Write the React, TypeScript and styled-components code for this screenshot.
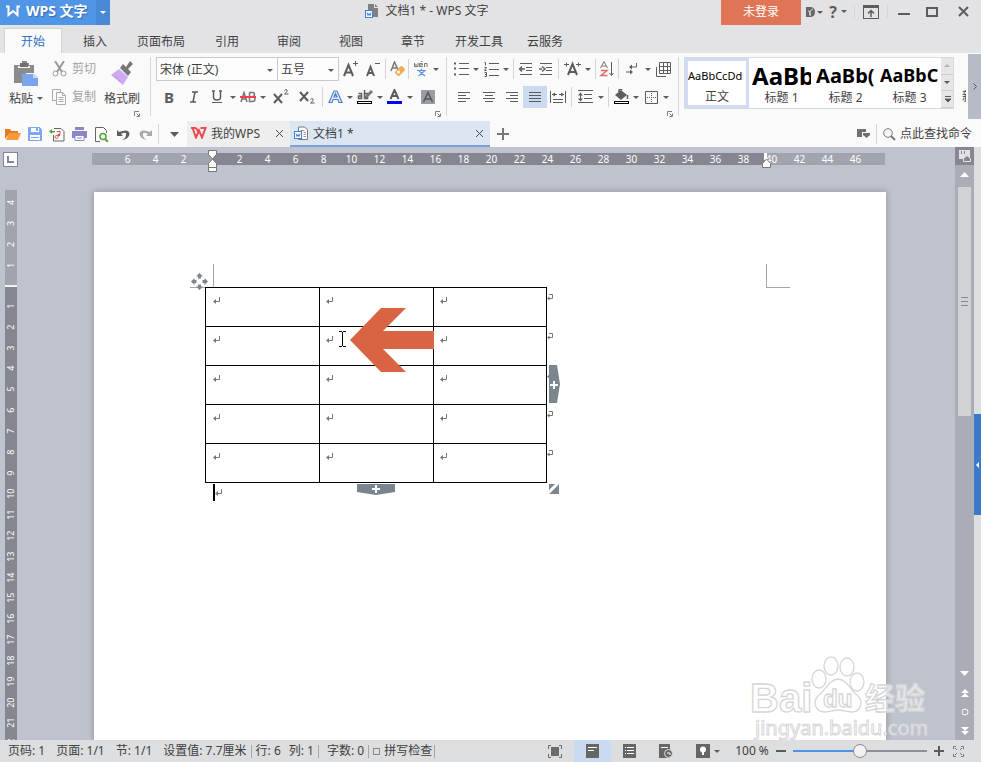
import React from 'react';
import styled, { createGlobalStyle, css } from 'styled-components';

const GlobalStyle = createGlobalStyle`
  * { box-sizing: border-box; }
  html, body { margin: 0; height: 100%; overflow: hidden; }
  body, button, input, select {
    font-family: "Noto Sans", "Noto Sans CJK SC", sans-serif;
    font-size: 12px;
    line-height: 16px;
    color: #3f3f3f;
  }
  button { border: 0; padding: 0; background: none; }
  svg { display: block; flex: none; }
  a { color: inherit; text-decoration: none; }
`;

/* ---------- shared parts ---------- */

const Shell = styled.div`
  display: flex;
  flex-direction: column;
  height: 100vh;
  background: #e3e3e5;
`;

const Icon = ({ w, h, children, label }: { w: number; h: number; children: React.ReactNode; label?: string }) => (
  <svg width={w} height={h} viewBox={`0 0 ${w} ${h}`} fill="none" aria-label={label} aria-hidden={!label}>
    {children}
  </svg>
);

const Caret = ({ color = '#5c5c5c' }: { color?: string }) => (
  <Icon w={6} h={3}>
    <path d="M0 0h6L3 3z" fill={color} />
  </Icon>
);

const Tool = styled.button<{ $w?: number; $on?: boolean }>`
  flex: none;
  display: flex;
  align-items: center;
  justify-content: center;
  gap: 4px;
  width: ${(p) => p.$w ?? 20}px;
  height: 22px;
  background: ${(p) => (p.$on ? '#c9daf1' : 'transparent')};
`;

const CaretTool = ({ label }: { label: string }) => (
  <Tool $w={10} aria-label={label}>
    <Caret />
  </Tool>
);

const Sep = styled.span<{ $h?: number }>`
  flex: none;
  width: 1px;
  height: ${(p) => p.$h ?? 20}px;
  margin: 0 2px;
  background: #d4d5d8;
`;

const Glyph = styled.span<{ $size: number }>`
  font-size: ${(p) => p.$size}px;
  line-height: 20px;
  color: #5c5c5c;
  font-weight: 700;
`;

/* ---------- title bar ---------- */

const TitleBar = styled.header`
  flex: none;
  display: flex;
  height: 25px;
`;

const Brand = styled.button`
  display: flex;
  align-items: center;
  gap: 6px;
  width: 96px;
  padding: 0 0 3px 6px;
  background: #5095e6;
  color: #fff;
  font-size: 14px;
  font-weight: 700;
  text-shadow: 1px 1px 1px #2f6cb5;
  white-space: nowrap;
`;

const BrandMenu = styled.button`
  display: flex;
  align-items: center;
  justify-content: center;
  width: 14px;
  background: #4a89d8;
`;

const Title = styled.div`
  flex: 1;
  display: flex;
  align-items: center;
  justify-content: center;
  gap: 7px;
  padding: 0 0 3px 22px;
  white-space: nowrap;
`;

const Login = styled.button`
  width: 80px;
  padding-bottom: 2px;
  background: #e07456;
  color: #fff;
`;

const WindowButtons = styled.div`
  display: flex;
  align-items: center;
  padding: 0 1px 2px 3px;
`;

/* ---------- menu tabs ---------- */

const Menu = styled.nav`
  flex: none;
  display: flex;
  align-items: flex-end;
  height: 28px;
  padding-left: 2px;
`;

const MenuTab = styled.a<{ $active?: boolean }>`
  display: flex;
  align-items: center;
  justify-content: center;
  height: 25px;
  min-width: 62px;
  padding: 2px 11px 0;
  white-space: nowrap;
  ${(p) =>
    p.$active &&
    css`
      min-width: 58px;
      margin: 0 2px;
      color: #2f6fbd;
      background: #fafafa;
      border: 1px solid #d2d3d6;
      border-bottom: 0;
    `}
`;

/* ---------- ribbon ---------- */

const Ribbon = styled.section`
  flex: none;
  display: flex;
  align-items: flex-start;
  height: 68px;
  background: #fafafa;
  overflow: hidden;
`;

const Group = styled.div<{ $left: number; $right: number }>`
  flex: none;
  display: flex;
  flex-direction: column;
  padding: 4px ${(p) => p.$right}px 0 ${(p) => p.$left}px;
  height: 64px;
  position: relative;
  &::after {
    content: '';
    position: absolute;
    right: 0;
    top: 4px;
    bottom: 1px;
    width: 1px;
    background: #d9dadc;
  }
`;

const Row = styled.div<{ $h: number; $mt?: number }>`
  display: flex;
  align-items: center;
  height: ${(p) => p.$h}px;
  margin-top: ${(p) => p.$mt ?? 0}px;
`;

const Launcher = styled.button`
  align-self: flex-end;
  margin-top: 3px;
  height: 6px;
`;

const Clip = styled.div`
  display: flex;
  height: 51px;
`;

const BigButton = styled.button`
  display: flex;
  flex-direction: column;
  align-items: center;
  justify-content: space-between;
  padding-top: 4px;
  white-space: nowrap;
  span { display: flex; align-items: center; gap: 4px; height: 19px; }
`;

const SmallStack = styled.div`
  display: flex;
  flex-direction: column;
  gap: 12px;
  padding: 4px 8px 0 9px;
`;

const SmallButton = styled.button`
  display: flex;
  align-items: center;
  gap: 5px;
  height: 16px;
  color: #a3a3a3;
  white-space: nowrap;
`;

const SelectBox = styled.label<{ $w: number; $joined?: boolean }>`
  position: relative;
  display: flex;
  align-items: center;
  width: ${(p) => p.$w}px;
  height: 24px;
  border: 1px solid #c9cacd;
  border-left-width: ${(p) => (p.$joined ? 0 : 1)}px;
  background: #fdfdfd;
  select {
    appearance: none;
    width: 100%;
    height: 22px;
    border: 0;
    padding: 2px 12px 0 3px;
    background: transparent;
  }
  svg { position: absolute; right: 4px; top: 11px; pointer-events: none; }
`;

const Gallery = styled.div`
  flex: none;
  display: flex;
  height: 52px;
  margin: 4px 0 0 5px;
  border: 1px solid #d9dadc;
  background: #fff;
`;

const StyleCard = styled.button<{ $on?: boolean }>`
  flex: none;
  display: flex;
  flex-direction: column;
  align-items: center;
  width: 64px;
  padding: ${(p) => (p.$on ? '0' : '3px 2px 0 3px')};
  border: ${(p) => (p.$on ? '3px solid #d0dcf3' : '0 solid transparent')};
`;

const Sample = styled.span<{ $size: number; $bold?: boolean }>`
  width: 100%;
  height: 29px;
  overflow: hidden;
  text-align: left;
  white-space: nowrap;
  color: #000;
  font-size: ${(p) => p.$size}px;
  font-weight: ${(p) => (p.$bold ? 700 : 400)};
  line-height: 29px;
`;

const GalleryScroll = styled.div`
  display: flex;
  flex-direction: column;
  width: 12px;
  background: #e6e6e8;
  button {
    flex: 1;
    display: flex;
    align-items: center;
    justify-content: center;
    border-bottom: 1px solid #cfcfd2;
  }
`;

const Clipped = styled.div`
  flex: 1;
  min-width: 0;
  overflow: hidden;
  padding: 36px 0 0 8px;
  margin-right: 2px;
  white-space: nowrap;
`;

const RibbonMore = styled.button`
  flex: none;
  display: flex;
  align-items: center;
  justify-content: center;
  width: 13px;
  height: 65px;
  margin-top: 1px;
  background: #b7bbc5;
`;

/* ---------- quick bar ---------- */

const QuickBar = styled.div`
  flex: none;
  display: flex;
  align-items: stretch;
  height: 26px;
  background: #fafafa;
`;

const QuickTools = styled.div`
  display: flex;
  align-items: center;
  padding-left: 2px;
`;

const DocTab = styled.div<{ $active?: boolean }>`
  display: flex;
  align-items: center;
  gap: 4px;
  width: ${(p) => (p.$active ? 200 : 103)}px;
  padding: 0 5px 0 4px;
  background: ${(p) => (p.$active ? '#dce6f2' : '#eeeeef')};
  border-bottom: 2px solid ${(p) => (p.$active ? '#7aa2d8' : '#eeeeef')};
  a { flex: 1; padding-top: 2px; white-space: nowrap; }
`;

const NewTab = styled.button`
  display: flex;
  align-items: center;
  justify-content: center;
  width: 26px;
`;

const QuickRight = styled.div`
  display: flex;
  align-items: center;
  margin-left: auto;
  padding-right: 9px;
`;

const SearchLink = styled.button`
  display: flex;
  align-items: center;
  gap: 4px;
  padding-left: 4px;
  white-space: nowrap;
`;

/* ---------- workspace ---------- */

const Workspace = styled.main`
  flex: 1;
  min-height: 0;
  display: flex;
  background: #bfc3cd;
  position: relative;
`;

const LeftRail = styled.div`
  flex: none;
  display: flex;
  flex-direction: column;
  width: 25px;
  padding: 5px 0 0 3px;
  overflow: hidden;
`;

const TabSelector = styled.button`
  display: flex;
  align-items: center;
  justify-content: center;
  width: 15px;
  height: 15px;
  background: #fff;
  border: 1px solid #85868f;
`;

const VRuler = styled.div`
  flex: 1;
  min-height: 0;
  display: flex;
  flex-direction: column;
  width: 12px;
  margin: 23px 0 0 2px;
  background: #85868f;
  overflow: hidden;
`;

const VPart = styled.div<{ $light?: boolean }>`
  flex: none;
  display: grid;
  grid-auto-rows: 1fr;
  height: ${(p) => (p.$light ? 97 : 467)}px;
  padding: ${(p) => (p.$light ? '2px 0 9px' : '9px 0 0')};
  background: ${(p) => (p.$light ? '#a2a4ad' : '#85868f')};
  border-bottom: ${(p) => (p.$light ? 2 : 0)}px solid #f2f2f2;
  span {
    display: flex;
    align-items: center;
    justify-content: center;
    writing-mode: vertical-rl;
    transform: rotate(180deg);
    color: #fff;
    font-size: 9px;
    line-height: 12px;
  }
`;

const Center = styled.div`
  flex: 1;
  min-width: 0;
  display: flex;
  flex-direction: column;
  overflow: hidden;
`;

const HRulerRow = styled.div`
  flex: none;
  display: flex;
  justify-content: center;
  height: 45px;
  padding: 6px 4px 0 0;
`;

const HRuler = styled.div`
  position: relative;
  display: flex;
  width: 793px;
  height: 12px;
  padding-left: 22px;
  background: linear-gradient(to right, #a2a4ad 120px, #85868f 120px, #85868f 674px, #a2a4ad 674px);
  span {
    width: 28px;
    text-align: center;
    color: #fff;
    font-size: 10px;
    line-height: 12px;
  }
`;

const Marker = styled.div<{ $x: number; $y: number }>`
  position: absolute;
  left: ${(p) => p.$x}px;
  top: ${(p) => p.$y}px;
`;

const PageRow = styled.div`
  flex: 1;
  min-height: 0;
  display: flex;
  justify-content: center;
`;

const Page = styled.article`
  flex: none;
  position: relative;
  width: 792px;
  padding: 95px 0 0 111px;
  background: #fff;
  box-shadow: 0 0 6px 1px #9a9da8;
`;

const CropMark = styled.i<{ $side: 'left' | 'right' }>`
  position: absolute;
  top: 72px;
  width: 24px;
  height: 24px;
  border: 0 solid #a6a6a6;
  border-bottom-width: 1px;
  ${(p) => (p.$side === 'left' ? 'left: 96px; border-right-width: 1px;' : 'right: 96px; border-left-width: 1px;')}
`;

const DocBody = styled.div`
  position: relative;
  width: 350px;
`;

const Grid = styled.table`
  border-collapse: collapse;
  table-layout: fixed;
  width: 349px;
  td {
    width: 114px;
    height: 39px;
    padding: 9px 0 0 7px;
    border: 1px solid #000;
    vertical-align: top;
    background: #fff;
  }
  td:nth-child(3) { width: 113px; }
  td:nth-child(2), td:nth-child(3) { padding-left: 6px; }
  td:last-child {
    width: 8px;
    padding: 5px 0 0 0;
    border: 0;
    background: transparent;
  }
`;

const LastLine = styled.p`
  display: flex;
  align-items: center;
  height: 17px;
  margin: 1px 0 0 8px;
  border-left: 2px solid #000;
`;

const Overlay = styled.div<{ $x: number; $y: number }>`
  position: absolute;
  left: ${(p) => p.$x}px;
  top: ${(p) => p.$y}px;
`;

const Watermark = styled.div`
  position: absolute;
  right: 52px;
  bottom: 0;
`;

const ScrollColumn = styled.div`
  flex: none;
  display: flex;
  flex-direction: column;
  align-items: center;
  width: 19px;
  background: #abadb6;
`;

const RulerToggle = styled.button`
  display: flex;
  align-items: center;
  justify-content: center;
  width: 19px;
  height: 18px;
  background: #85868f;
`;

const ScrollButton = styled.button`
  display: flex;
  align-items: center;
  justify-content: center;
  width: 19px;
  height: 19px;
`;

const Track = styled.div`
  flex: 1;
  width: 13px;
  margin-top: 3px;
`;

const Thumb = styled.div`
  display: flex;
  align-items: center;
  justify-content: center;
  height: 48%;
  background: #d0d2d6;
`;

const SideStrip = styled.aside`
  flex: none;
  display: flex;
  flex-direction: column;
  width: 7px;
  background: #dddee0;
`;

const Fill = styled.span<{ $n: number }>`
  flex: ${(p) => p.$n};
`;

const SideHandle = styled.button`
  display: flex;
  align-items: center;
  justify-content: center;
  height: 101px;
  background: #3a7acb;
`;

/* ---------- status bar ---------- */

const StatusBar = styled.footer`
  flex: none;
  display: flex;
  align-items: center;
  height: 22px;
  padding: 0 12px 0 8px;
  background: #dddee0;
  white-space: nowrap;
`;

const Stat = styled.span<{ $gap?: number }>`
  margin-right: ${(p) => p.$gap ?? 11}px;
`;

const StatSep = styled.span<{ $wide?: boolean }>`
  width: 1px;
  height: 13px;
  margin-right: ${(p) => (p.$wide ? 8 : 4)}px;
  background: #a5a5a8;
`;

const SpellCheck = styled.label`
  display: flex;
  align-items: center;
  gap: 4px;
  margin-right: 2px;
  input {
    appearance: none;
    width: 7px;
    height: 7px;
    margin: 0;
    border: 1px solid #8a8a8a;
  }
`;

const ViewTools = styled.div`
  display: flex;
  align-items: center;
  margin-left: auto;
`;

const ZoomSlider = styled.input`
  appearance: none;
  width: 134px;
  height: 16px;
  margin: 0 4px;
  background: linear-gradient(to right, #4f94e6 50%, #8e8f98 50%) center / 100% 2px no-repeat;
  &::-webkit-slider-thumb {
    appearance: none;
    width: 14px;
    height: 14px;
    border: 1px solid #8a8a8a;
    border-radius: 50%;
    background: #f2f2f2;
  }
`;

/* ---------- drawings ---------- */

const ink = '#5c5c5c';

const Lines = ({ rows }: { rows: [number, number][] }) => (
  <Icon w={16} h={14}>
    {rows.map(([x, w], i) => (
      <rect key={i} x={x} y={2 + i * 3} width={w} height={1} fill={ink} />
    ))}
  </Icon>
);

const CloseX = ({ size = 9, stroke = 1, color = '#4a4a4a' }) => (
  <Icon w={size} h={size}>
    <path d={`M1 1L${size - 1} ${size - 1}M${size - 1} 1L1 ${size - 1}`} stroke={color} strokeWidth={stroke} />
  </Icon>
);

const ParaMark = () => (
  <Icon w={8} h={8}>
    <path d="M6.500 0v4.500H2" stroke="#777" />
    <path d="M0 4.500L3 2v5z" fill="#777" />
  </Icon>
);

const RowMark = () => (
  <Icon w={7} h={8}>
    <path d="M2 1.500h3.500v4H2" stroke="#777" />
    <path d="M0 5.500L2.500 3.500v4z" fill="#777" />
  </Icon>
);

const DocIcon = () => (
  <Icon w={15} h={15}>
    <path d="M4.500 1h6l3 3v9.500h-9z" fill="#fff" stroke="#777" />
    <path d="M6.500 4.500h4M9.500 6.500h2.500M9.500 8.500h2.500M9.500 10.500h2.500" stroke="#999" />
    <rect x="0.500" y="5.500" width="7" height="7" fill="#fff" stroke="#3f83d6" />
    <path d="M2 7.500l1 3 1-2 1 2 1-3" stroke="#3f83d6" />
  </Icon>
);

const LauncherIcon = () => (
  <Icon w={6} h={6}>
    <path d="M.5 5V.5H5M5.500 2.500v3h-3M2.500 2.500l2.500 2.500" stroke="#77808f" />
  </Icon>
);

const hNumbers = ['6', '4', '2', '', ...Array.from({ length: 23 }, (_, i) => String((i + 1) * 2))];
const vTop = [4, 3, 2, 1];
const vMain = Array.from({ length: 22 }, (_, i) => i + 1);

/* ---------- sections ---------- */

const ClipboardGroup = () => (
  <Group $left={9} $right={11}>
    <Clip>
      <BigButton>
        <Icon w={26} h={26}>
          <path d="M1 4h6V2h2V0h5v2h2v2h5v8h-8v10H1z" fill="#8b8b8b" />
          <path d="M5 5h12v2H5z" fill="#f5f5f5" />
          <path d="M7 2h8v4H7z" fill="#707070" />
          <path d="M9 13h12l4 4v8H9z" fill="#7ba4ee" />
          <path d="M20 12v5h5z" fill="#c8dafb" />
        </Icon>
        <span>
          粘贴
          <Caret />
        </span>
      </BigButton>
      <SmallStack>
        <SmallButton>
          <Icon w={15} h={16}>
            <path d="M3 0l7 11M12 0L5 11" stroke="#999" strokeWidth="2" />
            <circle cx="3.500" cy="12.500" r="2.500" stroke="#999" />
            <circle cx="11.500" cy="12.500" r="2.500" stroke="#999" />
          </Icon>
          剪切
        </SmallButton>
        <SmallButton>
          <Icon w={15} h={16}>
            <path d="M4 11.500H.5V.5h8V3" stroke="#aaa" />
            <path d="M4.500 3.500h6l3 3v9h-9zM10.500 3.500v3h3M6.500 8.500h5M6.500 10.500h5M6.500 12.500h5" stroke="#aaa" />
          </Icon>
          复制
        </SmallButton>
      </SmallStack>
      <BigButton>
        <Icon w={24} h={24}>
          <path d="M16 6l4-6 3 3-5 5 3 3-3 4-8-8 3-4z" fill="#777" />
          <path d="M9 8l9 8-5 8L1 14z" fill="#cfaaf2" />
          <path d="M5 15l3 3M9 19l2 2" stroke="#b98ce6" />
        </Icon>
        <span>格式刷</span>
      </BigButton>
    </Clip>
    <Launcher aria-label="剪贴板设置">
      <LauncherIcon />
    </Launcher>
  </Group>
);

const FontGroup = () => (
  <Group $left={5} $right={6}>
    <Row $h={24}>
      <SelectBox $w={122}>
        <select aria-label="字体">
          <option>宋体 (正文)</option>
        </select>
        <Caret />
      </SelectBox>
      <SelectBox $w={61} $joined>
        <select aria-label="字号">
          <option>五号</option>
        </select>
        <Caret />
      </SelectBox>
      <Tool $w={24} aria-label="增大字号">
        <Icon w={16} h={18}>
          <path d="M1 16L5.500 5L10 16M3 12.500h5" stroke={ink} strokeWidth="2" />
          <path d="M10 3.500h5M12.500 1v5" stroke={ink} />
        </Icon>
      </Tool>
      <Tool aria-label="减小字号">
        <Icon w={15} h={18}>
          <path d="M1 16L4.500 7L8 16M2.500 13h4" stroke={ink} strokeWidth="2" />
          <path d="M9 3.500h5" stroke={ink} />
        </Icon>
      </Tool>
      <Sep />
      <Tool $w={18} aria-label="清除格式">
        <Icon w={15} h={16}>
          <path d="M1 10L4.500 1L8 9M2.500 7h4" stroke="#777" strokeWidth="1.500" />
          <rect x="-3" y="-5" width="6" height="10" rx="2" transform="translate(10 10) rotate(45)" fill="#f0ab57" />
          <circle cx="8.500" cy="11" r="1.500" fill="#fff" />
        </Icon>
      </Tool>
      <Sep />
      <Tool aria-label="拼音指南">
        <Icon w={15} h={16}>
          <path d="M.5 2v3.500h1.500V3M2 5.500h2V2M5.500 4h3V2.500h-3v3h3M10.500 6V2.500H13V6M7 .5h1.500" stroke="#777" />
          <path d="M3 9.500h9M7.500 7.500v2M5 10l6 5M10.500 10l-6 5" stroke="#5d93e0" strokeWidth="1.200" />
        </Icon>
      </Tool>
      <CaretTool label="拼音选项" />
    </Row>
    <Row $h={22} $mt={5}>
      <Tool $w={26}><Glyph $size={15}>B</Glyph></Tool>
      <Tool $w={24} aria-label="斜体">
        <Icon w={10} h={12}>
          <path d="M3 1h6M1 11h6M6 1L4 11" stroke={ink} strokeWidth="1.500" />
        </Icon>
      </Tool>
      <Tool $w={22} aria-label="下划线">
        <Icon w={12} h={14}>
          <path d="M2.500 1v6q0 3 3.500 3t3.500-3V1M1 1h3M8 1h3" stroke={ink} strokeWidth="1.500" />
          <path d="M1 12.500h10" stroke={ink} />
        </Icon>
      </Tool>
      <CaretTool label="下划线选项" />
      <Tool aria-label="删除线">
        <Icon w={16} h={12}>
          <path d="M1 11L4 1.500L7 11M2 8h4M9.500 1.500v9h3q2.500 0 2.500-2.500t-2.500-2h-3M9.500 1.500h3q2 0 2 2t-2 2" stroke="#777" strokeWidth="1.500" />
          <path d="M0 6h16" stroke="#f0424e" strokeWidth="2" />
        </Icon>
      </Tool>
      <CaretTool label="删除线选项" />
      <Tool $w={26} aria-label="上标">
        <Icon w={16} h={18}>
          <path d="M1 6l8 9M9 6l-8 9" stroke={ink} strokeWidth="2" />
          <path d="M11.500 2.500q1-1.500 2.500-.5t-2.500 4H15.500" stroke={ink} />
        </Icon>
      </Tool>
      <Tool $w={26} aria-label="下标">
        <Icon w={16} h={16}>
          <path d="M1 3l8 9M9 3l-8 9" stroke={ink} strokeWidth="2" />
          <path d="M11.500 10.500q1-1.500 2.500-.5t-2.500 4H15.500" stroke={ink} />
        </Icon>
      </Tool>
      <Sep />
      <Tool aria-label="文字效果">
        <Icon w={15} h={14}>
          <path d="M1 12.500L6 1h3l5 11.500h-3l-1-3H5l-1 3zM6 7h3L7.500 3.500z" stroke="#4f80cf" strokeWidth="1.200" fill="#e6effc" />
        </Icon>
      </Tool>
      <CaretTool label="文字效果选项" />
      <Tool aria-label="突出显示">
        <Icon w={16} h={16}>
          <path d="M1.500 4.500h3v5h-3v-2.500h3M7.500 1v8.500h3v-5h-3" stroke={ink} strokeWidth="1.500" />
          <path d="M14 1l2 2-6 6-3 1 1-3z" fill="#777" />
          <rect x="0.500" y="12.500" width="14" height="2" fill="#fff" stroke="#000" />
        </Icon>
      </Tool>
      <CaretTool label="突出显示选项" />
      <Tool aria-label="字体颜色">
        <Icon w={16} h={16}>
          <path d="M3.500 10L7.500 1L11.500 10M5 7h5" stroke={ink} strokeWidth="2" />
          <rect x="0" y="12" width="15" height="3" fill="#00f" />
        </Icon>
      </Tool>
      <CaretTool label="字体颜色选项" />
      <Tool $w={26} aria-label="字符底纹">
        <Icon w={14} h={14}>
          <rect width="14" height="14" fill="#9a9da5" />
          <path d="M2.500 12L7 2.500L11.500 12M4.500 9h5" stroke="#555" strokeWidth="1.500" />
        </Icon>
      </Tool>
    </Row>
    <Launcher aria-label="字体设置">
      <LauncherIcon />
    </Launcher>
  </Group>
);

const Indent = ({ right }: { right?: boolean }) => (
  <Icon w={14} h={14}>
    <path d="M1 1.500h12M7 5.500h6M7 8.500h6M1 12.500h12" stroke={ink} />
    <path d={right ? 'M0 7h3M3 4.500L6 7L3 9.500' : 'M6 7H2M3 4.500L.5 7L3 9.500'} stroke={ink} strokeWidth="1.500" />
  </Icon>
);

const ParagraphGroup = () => (
  <Group $left={4} $right={6}>
    <Row $h={24}>
      <Tool aria-label="项目符号">
        <Icon w={15} h={14}>
          <path d="M5 1.500h10M5 6.500h10M5 12.500h10" stroke={ink} />
          <path d="M0 .5h2v2H0zM0 5.500h2v2H0zM0 11.500h2v2H0z" fill={ink} />
        </Icon>
      </Tool>
      <CaretTool label="项目符号选项" />
      <Tool aria-label="编号">
        <Icon w={15} h={16}>
          <path d="M5 2.500h10M5 8.500h10M5 14.500h10" stroke={ink} />
          <path d="M.5 1.500h1v3M.5 6.500h2l-2 3h2M.5 11.500h2v4h-2M1 13.500h1" stroke={ink} />
        </Icon>
      </Tool>
      <CaretTool label="编号选项" />
      <Sep />
      <Tool aria-label="减少缩进"><Indent /></Tool>
      <Tool aria-label="增加缩进"><Indent right /></Tool>
      <Sep />
      <Tool $w={22} aria-label="中文版式">
        <Icon w={17} h={16}>
          <path d="M4 14L8.500 3L13 14M5.500 11h6" stroke={ink} strokeWidth="2" />
          <path d="M0 3.500h5M12 3.500h5M2.500 1.500v4M14.500 1.500v4" stroke={ink} />
        </Icon>
      </Tool>
      <CaretTool label="中文版式选项" />
      <Sep />
      <Tool $w={18} aria-label="排序">
        <Icon w={16} h={16}>
          <path d="M1.500 7L5 .5L8.500 7M3 5h4" stroke="#777" />
          <path d="M2 9.500h6L2 14.500h6.500" stroke="#e46a6e" strokeWidth="1.500" />
          <path d="M12.500 1v13M10.500 12l2 2.500 2-2.500" stroke={ink} />
        </Icon>
      </Tool>
      <Sep />
      <Tool $w={22} aria-label="显示段落标记">
        <Icon w={12} h={13}>
          <path d="M10.500 0v4H5M0 9h5" stroke={ink} />
          <path d="M3 4l3-2.500v5zM7 9L4 6.500v5z" fill={ink} />
        </Icon>
      </Tool>
      <CaretTool label="段落标记选项" />
      <Tool aria-label="制表位">
        <Icon w={15} h={15}>
          <path d="M3.500.5h11v11h-11zM7.500.5v11M11.500.5v11M3.500 4.500h11M3.500 8.500h11M.5 5v9.500H10" stroke={ink} />
        </Icon>
      </Tool>
    </Row>
    <Row $h={22} $mt={5}>
      <Tool $w={26} aria-label="左对齐"><Lines rows={[[2, 12], [2, 8], [2, 12], [2, 8]]} /></Tool>
      <Tool $w={24} aria-label="居中"><Lines rows={[[2, 12], [4, 8], [2, 12], [4, 8]]} /></Tool>
      <Tool $w={22} aria-label="右对齐"><Lines rows={[[2, 12], [6, 8], [2, 12], [6, 8]]} /></Tool>
      <Tool $w={24} $on aria-label="两端对齐"><Lines rows={[[2, 12], [2, 12], [2, 12], [2, 12]]} /></Tool>
      <Tool $w={22} aria-label="分散对齐">
        <Icon w={16} h={14}>
          <path d="M.5 1v12M15.500 1v12M3 9.500h10M3 12.500h10M2 4.500h5M9 4.500h5" stroke={ink} />
          <path d="M2 4.500l3-2v4zM14 4.500l-3-2v4z" fill={ink} />
        </Icon>
      </Tool>
      <Sep />
      <Tool $w={22} aria-label="行距">
        <Icon w={15} h={14}>
          <path d="M0 .5h15M6 4.500h8M6 8.500h8M0 12.500h15M2.500 4v6" stroke={ink} />
          <path d="M0 5.500L2.500 2.500L5 5.500zM0 8.500l2.500 3 2.500-3z" fill={ink} />
        </Icon>
      </Tool>
      <CaretTool label="行距选项" />
      <Sep />
      <Tool aria-label="底纹颜色">
        <Icon w={17} h={16}>
          <path d="M2 6L8 1l6 5-6 5z" fill={ink} />
          <path d="M6 3V1q2-1.500 3 0M14.500 6v4" stroke={ink} strokeWidth="1.500" />
          <rect x="1.500" y="12.500" width="14" height="2" fill="#fff" stroke="#000" />
        </Icon>
      </Tool>
      <CaretTool label="底纹选项" />
      <Tool aria-label="边框">
        <Icon w={13} h={13}>
          <path d="M.5.5h12v12H.5z" stroke={ink} />
          <path d="M6.500 2v9M2 6.500h9" stroke={ink} strokeDasharray="1 1" />
        </Icon>
      </Tool>
      <CaretTool label="边框选项" />
    </Row>
    <Launcher aria-label="段落设置">
      <LauncherIcon />
    </Launcher>
  </Group>
);

const styleCards = [
  { name: '正文', sample: 'AaBbCcDd', size: 11, on: true },
  { name: '标题 1', sample: 'AaBb', size: 24, bold: true },
  { name: '标题 2', sample: 'AaBb(', size: 20, bold: true },
  { name: '标题 3', sample: 'AaBbC', size: 18, bold: true },
];

const StyleGallery = () => (
  <Gallery>
    {styleCards.map((c) => (
      <StyleCard key={c.name} $on={c.on}>
        <Sample $size={c.size} $bold={c.bold}>{c.sample}</Sample>
        {c.name}
      </StyleCard>
    ))}
    <GalleryScroll>
      <button aria-label="上一行"><Icon w={6} h={3}><path d="M0 3h6L3 0z" fill="#b5b5b8" /></Icon></button>
      <button aria-label="下一行"><Caret /></button>
      <button aria-label="更多样式"><Icon w={7} h={7}><path d="M1 .5h6M1 3h6L4 6z" stroke={ink} fill={ink} /></Icon></button>
    </GalleryScroll>
  </Gallery>
);

const Baidu = () => (
  <Icon w={178} h={88} label="Baidu 经验">
    <g fill="#ffffff" fillOpacity="0.600" stroke="#d6d6d9" strokeWidth="1.300">
      <ellipse cx="68" cy="27" rx="7" ry="9" />
      <ellipse cx="80" cy="14" rx="7" ry="9" />
      <ellipse cx="96" cy="15" rx="7" ry="9" />
      <ellipse cx="106" cy="30" rx="7" ry="9" />
      <path d="M87 27C77 28 75 38 68 43C61 49 64 60 74 60C80 60 82 58 87 58C92 58 95 60 101 60C110 60 113 49 106 43C99 38 97 28 87 27z" />
      <text x="-1" y="60" fontFamily="Liberation Sans" fontWeight="700" fontSize="40">Bai</text>
      <text x="72" y="55" fontFamily="Liberation Sans" fontWeight="700" fontSize="24">du</text>
      <text x="114" y="57" fontFamily="Noto Sans CJK SC" fontWeight="700" fontSize="30">经验</text>
      <text x="4" y="83" fontFamily="Noto Sans" fontSize="20" strokeWidth="1">jingyan.baidu.com</text>
    </g>
  </Icon>
);

const Document = () => (
  <Page>
    <CropMark $side="left" />
    <CropMark $side="right" />
    <DocBody>
      <Grid>
        <tbody>
          {[0, 1, 2, 3, 4].map((r) => (
            <tr key={r}>
              <td><ParaMark /></td>
              <td><ParaMark /></td>
              <td><ParaMark /></td>
              <td><RowMark /></td>
            </tr>
          ))}
        </tbody>
      </Grid>
      <LastLine><ParaMark /></LastLine>
      <Overlay $x={-14} $y={-14}>
        <Icon w={17} h={17}>
          <path d="M8.500 0L12 3.500h-2v2H7v-2H5zM8.500 17L5 13.500h2v-2h3v2h2zM0 8.500L3.500 5v2h2v3h-2v2zM17 8.500L13.500 12v-2h-2V7h2V5z" fill="#7b858e" />
        </Icon>
      </Overlay>
      <Overlay $x={145} $y={21}>
        <Icon w={85} h={64}>
          <path d="M0 32L31 0h25L33 23h51v18H33l23 23H31z" fill="#d96443" />
        </Icon>
      </Overlay>
      <Overlay $x={134} $y={44}>
        <Icon w={7} h={16}>
          <path d="M0 .5h3M4 .5h3M3.500 1v14M0 15.500h3M4 15.500h3" stroke="#000" />
        </Icon>
      </Overlay>
      <Overlay $x={344} $y={78}>
        <Icon w={11} h={38}>
          <path d="M0 0h8l3 19-3 19H0z" fill="#7b858e" />
          <path d="M1 20h8M5 16v8" stroke="#fff" strokeWidth="2" />
        </Icon>
      </Overlay>
      <Overlay $x={152} $y={197}>
        <Icon w={38} h={11}>
          <path d="M0 0h38v8l-19 3L0 8z" fill="#7b858e" />
          <path d="M15 5h8M19 1v8" stroke="#fff" strokeWidth="2" />
        </Icon>
      </Overlay>
      <Overlay $x={344} $y={197}>
        <Icon w={10} h={10}>
          <path d="M0 0h6L0 6zM10 0v10H0z" fill="#7b858e" />
          <path d="M0 8.500L8.500 0" stroke="#fff" strokeWidth="2" />
        </Icon>
      </Overlay>
    </DocBody>
  </Page>
);

export default function App() {
  return (
    <Shell>
      <GlobalStyle />
      <TitleBar>
        <Brand>
          <Icon w={14} h={13}>
            <path d="M0 1.500h2.500V10L7 6l4.500 4V1.500H14" stroke="#fff" strokeWidth="2" />
          </Icon>
          WPS 文字
        </Brand>
        <BrandMenu aria-label="主菜单"><Caret color="#fff" /></BrandMenu>
        <Title>
          <Icon w={14} h={14}>
            <path d="M3 0h6v4h4v9H8V6H3z" fill="#808080" />
            <path d="M10 0l3 3h-3z" fill="#808080" />
            <rect x="0.500" y="6.500" width="7" height="7" fill="#fff" stroke="#3f83d6" />
            <path d="M2 8.500l1 3 1-2 1 2 1-3" stroke="#3f83d6" />
          </Icon>
          文档1 * - WPS 文字
        </Title>
        <Login>未登录</Login>
        <WindowButtons>
          <Tool $w={20} aria-label="皮肤">
            <Icon w={18} h={12}>
              <path d="M1 1h4q5 0 5 5t-5 5H1z" fill="#666" />
              <path d="M3 5q3 0 2 5M8 3Q4 4 5 9" stroke="#e3e3e5" />
              <path d="M12 5h6l-3 3z" fill={ink} />
            </Icon>
          </Tool>
          <Tool $w={28} aria-label="帮助">
            <Glyph $size={16}>?</Glyph>
            <Caret />
          </Tool>
          <Sep $h={13} />
          <Tool $w={28} aria-label="隐藏功能区">
            <Icon w={16} h={14}>
              <rect x="0.500" y="0.500" width="15" height="13" stroke={ink} />
              <path d="M1 2h14" stroke={ink} strokeWidth="2" />
              <path d="M8 12V6M5 8.500L8 5.500l3 3" stroke={ink} strokeWidth="1.500" />
            </Icon>
          </Tool>
          <Sep $h={13} />
          <Tool $w={28} aria-label="最小化">
            <Icon w={12} h={10}><path d="M0 7h12" stroke={ink} strokeWidth="2" /></Icon>
          </Tool>
          <Tool $w={28} aria-label="最大化">
            <Icon w={12} h={10}><rect x="1" y="1" width="10" height="8" stroke={ink} strokeWidth="2" /></Icon>
          </Tool>
          <Tool $w={34} aria-label="关闭"><CloseX size={11} stroke={2} color={ink} /></Tool>
        </WindowButtons>
      </TitleBar>
      <Menu>
        {['开始', '插入', '页面布局', '引用', '审阅', '视图', '章节', '开发工具', '云服务'].map((t, i) => (
          <MenuTab key={t} href="#" $active={i === 0}>{t}</MenuTab>
        ))}
      </Menu>
      <Ribbon>
        <ClipboardGroup />
        <FontGroup />
        <ParagraphGroup />
        <StyleGallery />
        <Clipped>新样式</Clipped>
        <RibbonMore aria-label="更多功能">
          <Icon w={4} h={7}><path d="M.5.5l3 3-3 3" stroke="#555" /></Icon>
        </RibbonMore>
      </Ribbon>
      <QuickBar>
        <QuickTools>
          <Tool $w={22} aria-label="打开">
            <Icon w={16} h={14}>
              <path d="M0 12V2h5l1 2h7v3H4z" fill="#e27d1f" />
              <path d="M4 6h12l-3 7H1z" fill="#f79a3b" />
            </Icon>
          </Tool>
          <Tool $w={22} aria-label="保存">
            <Icon w={14} h={14}>
              <path d="M.5.5h11l2 2v11H.5z" fill="#7fa6f0" stroke="#7fa6f0" />
              <path d="M3 1h8v4H3zM2 8h10v5H2z" fill="#fff" />
              <path d="M8 1h2v3H8zM3 10h8v1H3z" fill="#7fa6f0" />
            </Icon>
          </Tool>
          <Tool $w={22} aria-label="输出为PDF">
            <Icon w={16} h={15}>
              <path d="M5 1.500h7l3 3v9.500H4.500V8" stroke="#666" />
              <path d="M8 4.500h3v3H9v3a1.500 1.500 0 1 1-1.500-2H11" stroke="#d9534f" />
              <path d="M0 4.500L3 2v5zM3 4h3v1.500H3z" fill="#57a33c" />
            </Icon>
          </Tool>
          <Tool $w={22} aria-label="打印">
            <Icon w={15} h={14}>
              <path d="M3 0h9v3H3zM0 4h15v7H0z" fill="#8b87c6" />
              <path d="M3 8.500h9v5H3z" fill="#fff" stroke="#8b87c6" />
              <path d="M5 11h5" stroke="#8b87c6" />
            </Icon>
          </Tool>
          <Tool $w={22} aria-label="打印预览">
            <Icon w={15} h={15}>
              <path d="M6 14.500H1.500V.5h8l3 3V6" stroke="#666" />
              <circle cx="9" cy="9.500" r="3" stroke="#57a33c" strokeWidth="1.500" />
              <path d="M11 12l3 3" stroke="#57a33c" strokeWidth="2" />
            </Icon>
          </Tool>
          <Tool $w={22} aria-label="撤销">
            <Icon w={13} h={13}>
              <path d="M0 2v6h6L4 6q6-3 5 1 0 3-4 5 7-1 7.500-6Q12 0 2 4z" fill="#5f5f5f" />
            </Icon>
          </Tool>
          <Tool $w={22} aria-label="恢复">
            <Icon w={13} h={13}>
              <path d="M13 2v6H7l2-2Q3 3 4 7q0 3 4 5Q1 11 .5 6 1 0 11 4z" fill="#a9a9a9" />
            </Icon>
          </Tool>
          <Sep />
          <Tool $w={26} aria-label="自定义快速访问"><Icon w={9} h={5}><path d="M0 0h9L4.500 5z" fill={ink} /></Icon></Tool>
        </QuickTools>
        <DocTab>
          <Icon w={16} h={12}>
            <path d="M0 1h5M1.500 1l3.500 9.500 3-7 3 7L14.500 1H9.500M5 1l3 5" stroke="#ea4b52" strokeWidth="2" />
          </Icon>
          <a href="#">我的WPS</a>
          <Tool $w={12} aria-label="关闭 我的WPS"><CloseX /></Tool>
        </DocTab>
        <DocTab $active>
          <DocIcon />
          <a href="#">文档1 *</a>
          <Tool $w={12} aria-label="关闭 文档1"><CloseX /></Tool>
        </DocTab>
        <NewTab aria-label="新建文档">
          <Icon w={12} h={12}><path d="M0 6h12M6 0v12" stroke="#777" strokeWidth="2" /></Icon>
        </NewTab>
        <QuickRight>
          <Tool aria-label="窗口列表">
            <Icon w={13} h={10}>
              <path d="M0 0h9v3H5v5H0zM6 4h7v2l-3.500 3L6 6z" fill="#707070" />
            </Icon>
          </Tool>
          <Sep />
          <SearchLink>
            <Icon w={13} h={13}>
              <circle cx="5" cy="5" r="4.300" stroke="#777" />
              <path d="M8 8l4 4" stroke="#777" strokeWidth="2" />
            </Icon>
            点此查找命令
          </SearchLink>
        </QuickRight>
      </QuickBar>
      <Workspace>
        <LeftRail>
          <TabSelector aria-label="制表符类型">
            <Icon w={7} h={7}><path d="M1 0v6h6" stroke="#85868f" strokeWidth="2" /></Icon>
          </TabSelector>
          <VRuler>
            <VPart $light>{vTop.map((n) => <span key={n}>{n}</span>)}</VPart>
            <VPart>{vMain.map((n) => <span key={n}>{n}</span>)}</VPart>
          </VRuler>
        </LeftRail>
        <Center>
          <HRulerRow>
            <HRuler>
              {hNumbers.map((n, i) => <span key={i}>{n}</span>)}
              <Marker $x={116} $y={-3}>
                <Icon w={9} h={22}>
                  <path d="M.5.5h8v4l-4 4.500-4-4.500zM.5 17.500v-4L4.500 9l4 4.500v4zM.5 17.500h8v4h-8z" fill="#fff" stroke="#777" />
                </Icon>
              </Marker>
              <Marker $x={670} $y={0}>
                <Icon w={9} h={15}>
                  <path d="M2 0h3v7H2z" fill="#fff" />
                  <path d="M.5 14.500v-4L4.500 6l4 4.500v4z" fill="#fff" stroke="#777" />
                </Icon>
              </Marker>
            </HRuler>
          </HRulerRow>
          <PageRow>
            <Document />
          </PageRow>
        </Center>
        <ScrollColumn>
          <RulerToggle aria-label="显示标尺">
            <Icon w={12} h={12}>
              <path d="M0 0h11v9H0z" fill="#e2e2e4" />
              <path d="M2.500 1v3M5.500 1v3" stroke="#85868f" />
              <path d="M4.500 11.500v-3L8 5.500l3.500 3v3z" fill="#85868f" stroke="#e2e2e4" />
            </Icon>
          </RulerToggle>
          <ScrollButton aria-label="向上滚动"><Icon w={9} h={5}><path d="M0 5h9L4.500 0z" fill="#fff" /></Icon></ScrollButton>
          <Track>
            <Thumb><Icon w={7} h={9}><path d="M0 .5h7M0 4.500h7M0 8.500h7" stroke="#85868f" /></Icon></Thumb>
          </Track>
          <ScrollButton aria-label="向下滚动"><Icon w={9} h={5}><path d="M0 0h9L4.500 5z" fill="#fff" /></Icon></ScrollButton>
          <ScrollButton aria-label="上一页"><Icon w={8} h={8}><path d="M0 4h8L4 0zM0 8h8L4 4z" fill="#fff" /></Icon></ScrollButton>
          <ScrollButton aria-label="选择浏览对象"><Icon w={8} h={8}><circle cx="4" cy="4" r="3" stroke="#fff" /></Icon></ScrollButton>
          <ScrollButton aria-label="下一页"><Icon w={8} h={8}><path d="M0 0h8L4 4zM0 4h8L4 8z" fill="#fff" /></Icon></ScrollButton>
        </ScrollColumn>
        <SideStrip>
          <Fill $n={267} />
          <SideHandle aria-label="展开侧栏"><Icon w={3} h={6}><path d="M3 0v6L0 3z" fill="#fff" /></Icon></SideHandle>
          <Fill $n={225} />
        </SideStrip>
        <Watermark><Baidu /></Watermark>
      </Workspace>
      <StatusBar>
        <Stat>页码: 1</Stat>
        <Stat>页面: 1/1</Stat>
        <Stat>节: 1/1</Stat>
        <Stat $gap={4}>设置值: 7.7厘米</Stat>
        <StatSep />
        <Stat $gap={8}>行: 6</Stat>
        <Stat $gap={4}>列: 1</Stat>
        <StatSep $wide />
        <Stat $gap={4}>字数: 0</Stat>
        <StatSep />
        <SpellCheck><input type="checkbox" />拼写检查</SpellCheck>
        <StatSep />
        <ViewTools>
          <Tool $w={38} aria-label="全屏显示">
            <Icon w={14} h={13}>
              <path d="M3 2h8v9H3z" fill="#6b6b6b" />
              <path d="M.5 4V.5H3M11 .5h2.500V4M13.500 9v3.500H11M3 12.500H.5V9" stroke="#6b6b6b" />
            </Icon>
          </Tool>
          <Tool $w={37} $on aria-label="页面视图">
            <Icon w={13} h={14}><path d="M0 0h13v14H0z" fill="#666" /><path d="M2 3.500h9M2 6.500h6" stroke="#fff" /></Icon>
          </Tool>
          <Tool $w={37} aria-label="大纲视图">
            <Icon w={13} h={14}><path d="M0 0h13v14H0z" fill="#666" /><path d="M2 3.500h1M4 3.500h7M2 6.500h1M4 6.500h7M2 9.500h1M4 9.500h7" stroke="#fff" /></Icon>
          </Tool>
          <Tool $w={37} aria-label="Web版式">
            <Icon w={15} h={14}>
              <path d="M0 0h11v14H0z" fill="#666" />
              <path d="M2 3.500h7" stroke="#fff" />
              <circle cx="9.500" cy="9.500" r="4" fill="#666" stroke="#dddee0" />
              <path d="M8 9h3v2" stroke="#fff" />
            </Icon>
          </Tool>
          <Tool $w={46} aria-label="护眼模式">
            <Icon w={14} h={14}>
              <path d="M0 0h14v14H0z" fill="#666" />
              <circle cx="7" cy="5.500" r="3" fill="#fff" />
              <path d="M6 8h2v3H6z" fill="#fff" />
            </Icon>
            <Caret />
          </Tool>
          <Tool $w={42} aria-label="显示比例">100 %</Tool>
          <Tool $w={16} aria-label="缩小"><Icon w={10} h={10}><path d="M0 5h10" stroke={ink} strokeWidth="2" /></Icon></Tool>
          <ZoomSlider type="range" min={0} max={200} defaultValue={100} aria-label="缩放" />
          <Tool $w={16} aria-label="放大"><Icon w={10} h={10}><path d="M0 5h10M5 0v10" stroke={ink} strokeWidth="2" /></Icon></Tool>
          <Tool $w={22} aria-label="最佳缩放">
            <Icon w={11} h={11}>
              <path d="M.5 3V.5H3M8 .5h2.500V3M10.500 8v2.500H8M3 10.500H.5V8M2 2l2 2M9 2L7 4M9 9L7 7M2 9l2-2" stroke="#777" />
            </Icon>
          </Tool>
        </ViewTools>
      </StatusBar>
    </Shell>
  );
}
